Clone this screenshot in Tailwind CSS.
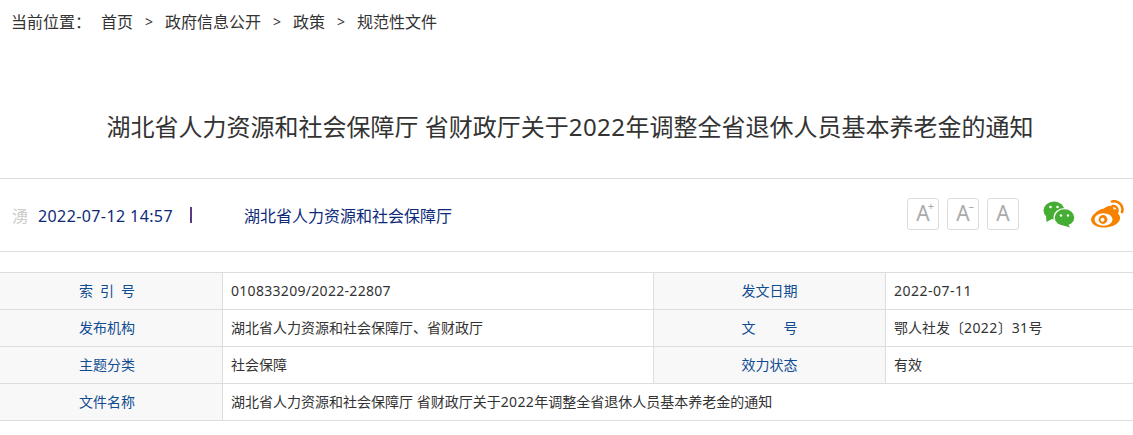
<!DOCTYPE html>
<html lang="zh-CN">

<head>
    <meta charset="UTF-8">
    <title>关于2022年调整全省退休人员基本养老金的通知</title>
    <script src="https://cdn.jsdelivr.net/npm/@tailwindcss/browser@4"></script>
</head>

<body class="bg-white overflow-hidden font-['Noto_Sans','Noto_Sans_CJK_SC',sans-serif]">
    <div class="w-[1133px] h-[435px] overflow-hidden">
        <!-- 面包屑 -->
        <div class="h-[45px] pb-[2px] pl-[11px] flex items-center text-[16px] text-[#333] leading-none">
            <span>当前位置：</span>
            <a class="ml-[10px]">首页</a>
            <span class="w-[32px] text-center text-[14px]">&gt;</span>
            <a>政府信息公开</a>
            <span class="w-[32px] text-center text-[14px]">&gt;</span>
            <a>政策</a>
            <span class="w-[32px] text-center text-[14px]">&gt;</span>
            <a>规范性文件</a>
        </div>

        <!-- 标题 -->
        <h1 class="h-[133px] pt-[65px] pl-[7px] text-center text-[24px] leading-[34px] text-[#333] whitespace-nowrap">
            湖北省人力资源和社会保障厅 省财政厅关于<span class="tracking-[0.5px]">2022</span>年调整全省退休人员基本养老金的通知</h1>

        <!-- 信息栏 -->
        <div class="h-[74px] border-y border-[#ddd] flex items-center pl-[12px] text-[16px] text-[#0d2a7a]">
            <span class="text-[#ccc] w-[26px] mt-[2px]">湧</span>
            <span class="tracking-[0.4px] mt-[2px]">2022-07-12 14:57</span>
            <span class="ml-[17px] w-[2px] h-[16px] bg-[#5c3a84]"></span>
            <span class="ml-[52px] mt-[2px]">湖北省人力资源和社会保障厅</span>

            <div class="ml-auto mb-[2px] flex items-center">
                <div class="w-[32px] h-[32px] border border-[#ddd] rounded-[3px] flex items-center justify-center text-[21px] text-[#aaa] relative">
                    A<span class="absolute right-[4px] top-[1px] text-[11px] leading-none">+</span>
                </div>
                <div class="ml-[8px] w-[32px] h-[32px] border border-[#ddd] rounded-[3px] flex items-center justify-center text-[21px] text-[#aaa] relative">
                    A<span class="absolute right-[4px] top-[1px] text-[11px] leading-none">–</span>
                </div>
                <div class="ml-[8px] w-[32px] h-[32px] border border-[#ddd] rounded-[3px] flex items-center justify-center text-[21px] text-[#aaa]">A</div>

                <!-- 微信 -->
                <svg class="ml-[24px]" width="33" height="27" viewBox="0 0 33 27">
                    <ellipse cx="11" cy="9.500" rx="10.500" ry="9" fill="#46ad34" />
                    <path d="M3 15 L3.500 21 L9 18 Z" fill="#46ad34" />
                    <circle cx="7.500" cy="6" r="1.300" fill="#fff" />
                    <circle cx="14.500" cy="6" r="1.300" fill="#fff" />
                    <ellipse cx="21.500" cy="16.500" rx="11" ry="9.500" fill="#fff" />
                    <ellipse cx="21.500" cy="16.500" rx="9.800" ry="8.300" fill="#46ad34" />
                    <path d="M25 23 L27 26.500 L20.500 24.500 Z" fill="#46ad34" />
                    <circle cx="18" cy="14.500" r="1.200" fill="#fff" />
                    <circle cx="25" cy="14.500" r="1.200" fill="#fff" />
                </svg>

                <!-- 微博 -->
                <svg class="ml-[15px] mr-[9px]" width="33" height="28" viewBox="0 0 33 28">
                    <path d="M13 8.500C18 4.500 23 5 22.500 9.500C26 8.500 28 10.500 27 13.500C28.500 15 30 17 28.500 20.500C26 25.500 18 28 11.500 27.500C5 27 0 24 0 19.500C0 15.500 7 9.500 13 8.500Z" fill="#f78200" />
                    <ellipse cx="12.500" cy="19.500" rx="9" ry="6.200" fill="#fff" />
                    <circle cx="12" cy="19.500" r="4.400" fill="#f78200" />
                    <circle cx="11.500" cy="19.800" r="2" fill="#fff" />
                    <path d="M21 1.500C27.500 0 33 6 31 12" fill="none" stroke="#f78200" stroke-width="2.600" stroke-linecap="round" />
                    <path d="M21.500 6C25 5.500 27.500 8.500 26.500 11.500" fill="none" stroke="#f78200" stroke-width="2.400" stroke-linecap="round" />
                </svg>
            </div>
        </div>

        <!-- 索引表 -->
        <table class="mt-[20px] -ml-[1px] w-[1136px] table-fixed border-collapse text-[14px] text-[#333]">
            <colgroup>
                <col class="w-[223px]">
                <col class="w-[431px]">
                <col class="w-[232px]">
                <col>
            </colgroup>
            <tbody>
                <tr class="h-[37px]">
                    <td class="border border-[#ddd] bg-[#f8f8f8] text-center pr-[8px] pb-[2px] text-[#0f4c91]"><span class="inline-block w-[56px] [text-align-last:justify]">索 引 号</span></td>
                    <td class="border border-[#ddd] pl-[8px] pb-[2px] tracking-[0.3px]">010833209/2022-22807</td>
                    <td class="border border-[#ddd] bg-[#f8f8f8] text-center pb-[2px] text-[#0f4c91]">发文日期</td>
                    <td class="border border-[#ddd] pl-[8px] pb-[2px] tracking-[0.5px]">2022-07-11</td>
                </tr>
                <tr class="h-[37px]">
                    <td class="border border-[#ddd] bg-[#f8f8f8] text-center pr-[8px] pb-[2px] text-[#0f4c91]">发布机构</td>
                    <td class="border border-[#ddd] pl-[8px] pb-[2px]">湖北省人力资源和社会保障厅、省财政厅</td>
                    <td class="border border-[#ddd] bg-[#f8f8f8] text-center pb-[2px] text-[#0f4c91]"><span class="inline-block w-[56px] [text-align-last:justify]">文 号</span></td>
                    <td class="border border-[#ddd] pl-[8px] pb-[2px]">鄂人社发〔<span class="tracking-[0.4px]">2022</span>〕<span class="tracking-[0.4px]">31</span>号</td>
                </tr>
                <tr class="h-[37px]">
                    <td class="border border-[#ddd] bg-[#f8f8f8] text-center pr-[8px] pb-[2px] text-[#0f4c91]">主题分类</td>
                    <td class="border border-[#ddd] pl-[8px] pb-[2px]">社会保障</td>
                    <td class="border border-[#ddd] bg-[#f8f8f8] text-center pb-[2px] text-[#0f4c91]">效力状态</td>
                    <td class="border border-[#ddd] pl-[8px] pb-[2px]">有效</td>
                </tr>
                <tr class="h-[37px]">
                    <td class="border border-[#ddd] bg-[#f8f8f8] text-center pr-[8px] pb-[2px] text-[#0f4c91]">文件名称</td>
                    <td class="border border-[#ddd] pl-[8px] pb-[2px]" colspan="3">湖北省人力资源和社会保障厅 省财政厅关于<span class="tracking-[0.4px]">2022</span>年调整全省退休人员基本养老金的通知</td>
                </tr>
            </tbody>
        </table>
    </div>
</body>

</html>
